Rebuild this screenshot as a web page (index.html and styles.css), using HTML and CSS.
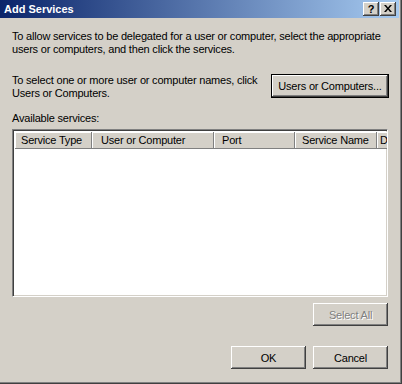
FILE: index.html
```
<!DOCTYPE html>
<html lang="en">
  <head>
    <meta charset="UTF-8" />
    <title>Add Services</title>
    <link rel="stylesheet" href="styles.css">
  </head>
  <body>
    <div class="window">
      <div class="titlebar">
        <span class="title">Add Services</span>
        <div class="title-buttons">
          <button class="tbtn help">?</button>
          <button class="tbtn close">
            <svg width="8" height="7" viewBox="0 0 8 7">
              <path d="M0 0h2l2 2.5L6 0h2L5 3.5 8 7H6L4 4.5 2 7H0l3-3.5z" fill="#000" />
            </svg>
          </button>
        </div>
      </div>

      <div class="content">
        <p class="intro">
          To allow services to be delegated for a user or computer, select the appropriate<br />
          users or computers, and then click the services.
        </p>

        <div class="pick-row">
          <p>
            To select one or more user or computer names, click<br />
            Users or Computers.
          </p>
          <button class="btn btn-default wide">Users or Computers...</button>
        </div>

        <div class="label">Available services:</div>
        <div class="listview">
          <div class="lv-header">
            <div class="col col-type">Service Type</div>
            <div class="col col-user">User or Computer</div>
            <div class="col col-port">Port</div>
            <div class="col col-name">Service Name</div>
            <div class="col col-domain">D</div>
          </div>
        </div>

        <div class="button-row select-row">
          <button class="btn" disabled>Select All</button>
        </div>

        <div class="button-row footer">
          <button class="btn">OK</button>
          <button class="btn">Cancel</button>
        </div>
      </div>
    </div>
  </body>
</html>
```

FILE: styles.css
```
body {
  margin: 0;
  padding: 0;
  font-family: "Liberation Sans", Arial, sans-serif;
  font-size: 11px;
  letter-spacing: -0.2px;
  color: #000;
}

.window {
  width: 402px;
  height: 384px;
  box-sizing: border-box;
  background-color: #d4d0c8;
  box-shadow: inset -1px -1px #404040, inset -2px -2px #808080;
  overflow: hidden;
}

.titlebar {
  height: 18px;
  margin-right: 3px;
  display: flex;
  align-items: center;
  justify-content: space-between;
  background: linear-gradient(to right, #0a246a, #a6caf0);
}

.title {
  color: #fff;
  font-weight: bold;
  font-size: 11px;
  letter-spacing: 0;
  padding-left: 4px;
}

.title-buttons {
  display: flex;
  gap: 1px;
  margin-right: 3px;
}

.tbtn {
  width: 16px;
  height: 14px;
  padding: 0;
  border: none;
  background-color: #d4d0c8;
  box-shadow: inset -1px -1px #404040, inset 1px 1px #fff, inset -2px -2px #808080;
  display: flex;
  align-items: center;
  justify-content: center;
  font-family: "Liberation Sans", Arial, sans-serif;
  font-weight: bold;
  font-size: 11px;
  line-height: 1;
  color: #000;
}

.close svg {
  display: block;
  margin-top: -1px;
}

.content {
  padding: 0 14px 0 12px;
  white-space: nowrap;
}

p {
  margin: 0;
  line-height: 13px;
}

.intro {
  margin-top: 12px;
}

.pick-row {
  display: flex;
  justify-content: space-between;
  align-items: flex-start;
  margin-top: 18px;
}

.label {
  margin-top: 12px;
  line-height: 13px;
}

.btn {
  height: 23px;
  width: 75px;
  padding: 0;
  border: none;
  background-color: #d4d0c8;
  box-shadow: inset -1px -1px #404040, inset 1px 1px #fff, inset -2px -2px #808080;
  font-family: "Liberation Sans", Arial, sans-serif;
  font-size: 11px;
  letter-spacing: -0.2px;
  color: #000;
}

.btn.wide {
  width: 116px;
  height: 22px;
  margin-top: 1px;
}

.btn-default {
  outline: 1px solid #000;
}

.btn:disabled {
  color: #808080;
  text-shadow: 1px 1px #fff;
}

.listview {
  margin-top: 4px;
  height: 168px;
  box-sizing: border-box;
  background-color: #fff;
  border-top: 1px solid #808080;
  border-left: 1px solid #808080;
  border-right: 1px solid #fff;
  border-bottom: 1px solid #fff;
  box-shadow: inset 1px 1px #404040, inset -1px -1px #d4d0c8;
  padding: 2px 0 1px 2px;
  overflow: hidden;
}

.lv-header {
  display: flex;
  height: 17px;
  overflow: hidden;
}

.col {
  flex-shrink: 0;
  box-sizing: border-box;
  height: 17px;
  line-height: 16px;
  padding-left: 6px;
  background-color: #d4d0c8;
  box-shadow: inset -1px -1px #808080, inset 1px 1px #fff, inset -2px 0 #d4d0c8;
  overflow: hidden;
}

.col-type {
  width: 77px;
}

.col-user {
  width: 122px;
  padding-left: 9px;
}

.col-port {
  width: 81px;
  padding-left: 8px;
}

.col-name {
  width: 82px;
  padding-left: 7px;
}

.col-domain {
  flex: 1;
  padding-left: 3px;
  box-shadow: inset 0 -1px #808080, inset 1px 1px #fff;
}

.button-row {
  display: flex;
  justify-content: flex-end;
  gap: 7px;
}

.select-row {
  margin-top: 6px;
}

.footer {
  margin-top: 20px;
}
```
